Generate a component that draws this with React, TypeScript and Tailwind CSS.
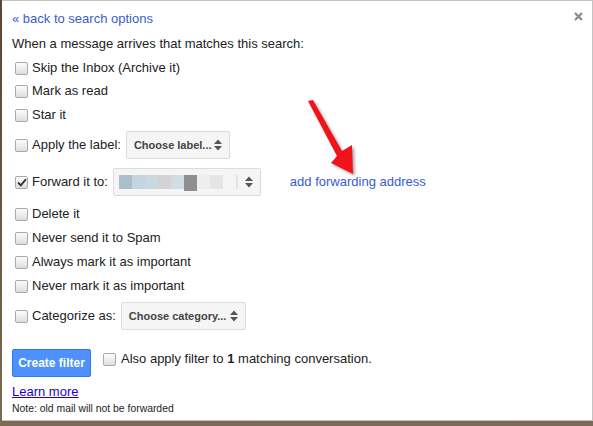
import React from 'react';

const Check = ({ checked = false }: { checked?: boolean }) => (
  <span className="relative flex h-[13px] w-[13px] shrink-0 items-center justify-center rounded-[2px] border border-[#a9a9a9] bg-gradient-to-b from-[#fdfdfd] to-[#dedede]">
    {checked && (
      <svg width="10" height="9" viewBox="0 0 10 9" className="absolute">
        <path d="M1 4.5 L3.8 7.3 L9 1.2" fill="none" stroke="#333" strokeWidth="1.8" />
      </svg>
    )}
  </span>
);

const UpDown = () => (
  <svg width="8" height="12" viewBox="0 0 8 12" className="shrink-0">
    <path d="M0 5 L4 0.5 L8 5 Z" fill="#555" />
    <path d="M0 7 L4 11.5 L8 7 Z" fill="#555" />
  </svg>
);

const Select = ({ label, width }: { label: string; width: string }) => (
  <div
    className={`ml-[5px] flex h-[28px] items-center justify-between whitespace-nowrap rounded-[2px] border border-[#dcdcdc] bg-[#f5f5f5] pl-[7px] pr-[7px] text-[11px] font-bold text-[#444] ${width}`}
  >
    <span>{label}</span>
    <UpDown />
  </div>
);

const Row = ({
  h,
  checked,
  label,
  children,
}: {
  h: string;
  checked?: boolean;
  label: string;
  children?: React.ReactNode;
}) => (
  <div className={`flex items-center pl-[3px] ${h}`}>
    <Check checked={checked} />
    <span className="ml-[4px]">{label}</span>
    {children}
  </div>
);

const blocks = [
  '#aabfcc',
  '#c5d5dd',
  '#c9d9e2',
  '#d3d4d1',
  '#cfdde5',
  '#8f8f8f',
  '#eeeeee',
  '#e6e6e6',
  '#f5f5f5',
];

export default function App() {
  return (
    <div className="h-[426px] w-[593px] overflow-hidden bg-gradient-to-b from-[#5a4632] to-[#7d6a52]">
      <div
        className="relative ml-[2px] h-[421px] w-[591px] border-y border-r border-[#c3c3c3] bg-white pl-[10px] pt-[5px] text-[13px] text-[#222]"
        style={{ fontFamily: '"Liberation Sans", Arial, sans-serif' }}
      >
        <svg width="9" height="9" viewBox="0 0 9 9" className="absolute left-[572px] top-[11px]">
          <path d="M1 1 L8 8 M8 1 L1 8" stroke="#8a8a8a" strokeWidth="2.2" />
        </svg>

        <div className="flex h-[25px] items-center text-[#3a5bd4]">« back to search options</div>
        <div className="flex h-[26px] items-center">When a message arrives that matches this search:</div>

        <Row h="h-[22px]" label="Skip the Inbox (Archive it)" />
        <Row h="h-[24px]" label="Mark as read" />
        <Row h="h-[24px]" label="Star it" />
        <Row h="h-[36px]" label="Apply the label:">
          <Select label="Choose label..." width="w-[104px]" />
        </Row>
        <Row h="h-[38px]" checked label="Forward it to:">
          <div className="ml-[5px] flex h-[28px] w-[148px] items-center justify-between rounded-[2px] border border-[#dcdcdc] bg-[#f5f5f5] pl-[5px] pr-[7px]">
            <div className="flex h-[14px] items-start">
              {blocks.map((c, i) => (
                <span
                  key={i}
                  className={i === 5 ? 'h-[16px] w-[13px]' : 'h-[14px] w-[13px]'}
                  style={{ backgroundColor: c }}
                />
              ))}
              <span className="h-[14px] w-[2px] bg-[#e4e4e4]" />
            </div>
            <UpDown />
          </div>
          <span className="ml-[29px] text-[#3a5bd4]">add forwarding address</span>
        </Row>
        <Row h="h-[26px]" label="Delete it" />
        <Row h="h-[22px]" label="Never send it to Spam" />
        <Row h="h-[26px]" label="Always mark it as important" />
        <Row h="h-[22px]" label="Never mark it as important" />
        <Row h="h-[38px]" label="Categorize as:">
          <Select label="Choose category..." width="w-[125px]" />
        </Row>

        <div className="mt-[14px] flex items-start">
          <button className="flex h-[28px] w-[79px] items-center justify-center rounded-[2px] border border-[#3079ed] bg-[#4d90fe] text-[12px] font-bold text-white">
            Create filter
          </button>
          <div className="ml-[12px] flex h-[20px] items-center">
            <Check />
            <span className="ml-[5px]">
              Also apply filter to <b>1</b> matching conversation.
            </span>
          </div>
        </div>
        <div className="mt-[4px] flex h-[22px] items-center text-[#2200cc] underline">Learn more</div>
        <div className="flex h-[12px] items-center text-[10.4px]">Note: old mail will not be forwarded</div>

        <svg
          width="60"
          height="90"
          viewBox="0 0 60 90"
          className="absolute left-[300px] top-[94px]"
          style={{ filter: 'drop-shadow(2px 2px 1.5px rgba(0,0,0,0.35))' }}
        >
          <path d="M6 6 L11 5 L40 56 L50 50 L51 79 L29 68 L35 61 Z" fill="#f0141a" />
        </svg>
      </div>
    </div>
  );
}
